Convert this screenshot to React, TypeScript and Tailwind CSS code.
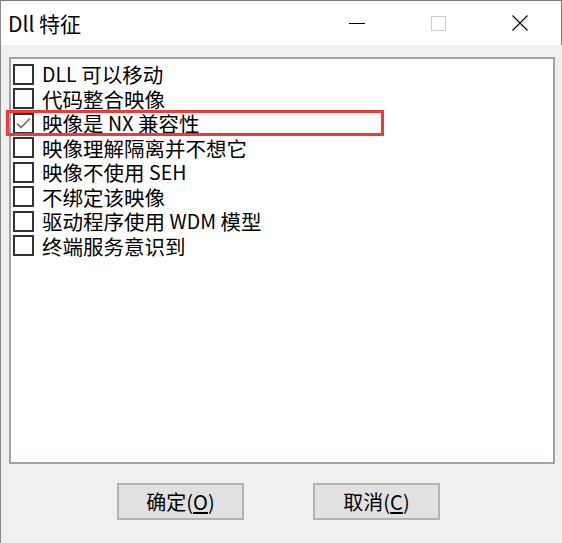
import React from "react";

const items: { parts: [string, boolean][]; checked?: boolean }[] = [
  { parts: [["DLL", true], [" 可以移动", false]] },
  { parts: [["代码整合映像", false]] },
  { parts: [["映像是 ", false], ["NX", true], [" 兼容性", false]], checked: true },
  { parts: [["映像理解隔离并不想它", false]] },
  { parts: [["映像不使用 ", false], ["SEH", true]] },
  { parts: [["不绑定该映像", false]] },
  { parts: [["驱动程序使用 ", false], ["WDM", true], [" 模型", false]] },
  { parts: [["终端服务意识到", false]] },
];

const font = { fontFamily: '"Noto Sans CJK SC", "Noto Sans", sans-serif' };

function CheckBox({ checked }: { checked?: boolean }) {
  return (
    <div className="w-[21px] h-[21px] border-2 border-[#333333] bg-white shrink-0 flex items-center justify-center">
      {checked && (
        <svg width="17" height="17" viewBox="0 0 17 17">
          <polyline points="2,8.5 6,12.5 15,3.5" fill="none" stroke="#707070" strokeWidth="1.7" />
        </svg>
      )}
    </div>
  );
}

export default function App() {
  return (
    <div
      className="relative w-[562px] h-[543px] bg-[#f0f0f0] border-l border-[#8a8a8a] flex flex-col text-black"
      style={font}
    >
      <div className="h-[45px] bg-white border-t border-r border-[#7a7a7a] flex items-center pl-[7px] shrink-0">
        <span className="text-[21px] leading-[24px]">Dll 特征</span>
        <div className="ml-auto flex items-center h-full">
          <div className="w-[16px] h-px bg-black mr-[66px]"></div>
          <div className="w-[15px] h-[15px] border border-[#cccccc] mr-[66px]"></div>
          <svg width="16" height="16" viewBox="0 0 16 16" className="mr-[33px]">
            <path d="M0.5 0.5 L15.5 15.5 M15.5 0.5 L0.5 15.5" stroke="#000" strokeWidth="1.1" />
          </svg>
        </div>
      </div>

      <div className="mt-[12px] ml-[8px] w-[546px] h-[407px] bg-white border-2 border-[#9fa4ab] pt-[3px] pl-[2px] flex flex-col">
        {items.map((it, i) => (
          <div key={i} className="h-[24.5px] flex items-center gap-[8px]">
            <CheckBox checked={it.checked} />
            <span className="text-[20.5px] leading-[22px] whitespace-pre flex">
              {it.parts.map(([t, latin], j) => (
                <span key={j} className={latin ? "text-[19.5px] leading-[22px] block" : "leading-[22px] block"}>
                  {t}
                </span>
              ))}
            </span>
          </div>
        ))}
      </div>

      <div className="mt-[19px] flex justify-center gap-[69px] pr-[6px]">
        <button className="w-[127px] h-[37px] bg-[#e1e1e1] border-2 border-[#b3b3b3] text-[20px] leading-[22px] flex items-center justify-center">
          确定(<span className="underline underline-offset-2">O</span>)
        </button>
        <button className="w-[127px] h-[37px] bg-[#e1e1e1] border-2 border-[#b3b3b3] text-[20px] leading-[22px] flex items-center justify-center">
          取消(<span className="underline underline-offset-2">C</span>)
        </button>
      </div>

      <div className="absolute left-[5px] top-[110px] w-[378px] h-[26px] border-[3px] border-[#f03a3a]"></div>
    </div>
  );
}
